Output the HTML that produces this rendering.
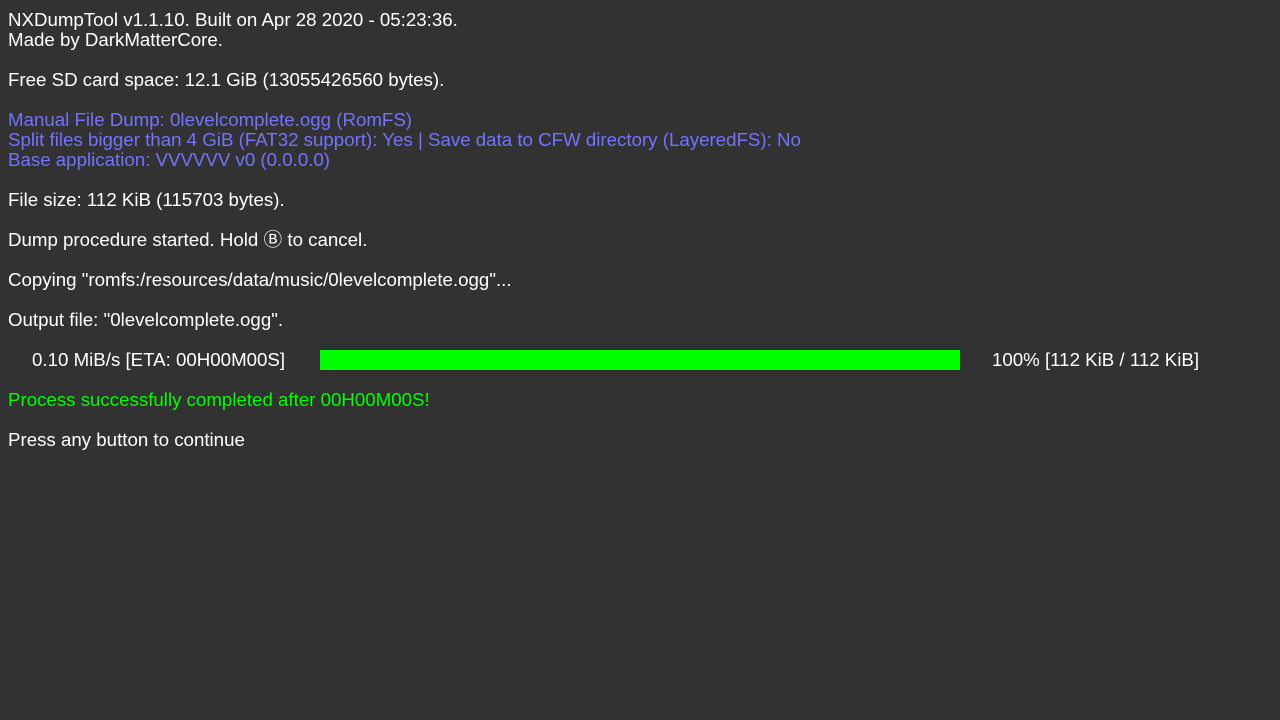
<!DOCTYPE html>
<html><head><meta charset="utf-8"><style>
body{margin:0;width:1280px;height:720px;background:#323232;overflow:hidden;font-family:"Liberation Sans",sans-serif;font-size:18.7px;color:#fff}
.l{position:absolute;left:8px;white-space:pre;line-height:20px}
.b{color:#7373ff}.g{color:#00ff00}
</style></head><body>
<div class="l" style="top:10px">NXDumpTool v1.1.10. Built on Apr 28 2020 - 05:23:36.</div>
<div class="l" style="top:30px">Made by DarkMatterCore.</div>
<div class="l" style="top:70px">Free SD card space: 12.1 GiB (13055426560 bytes).</div>
<div class="l b" style="top:110px">Manual File Dump: 0levelcomplete.ogg (RomFS)</div>
<div class="l b" style="top:130px">Split files bigger than 4 GiB (FAT32 support): Yes | Save data to CFW directory (LayeredFS): No</div>
<div class="l b" style="top:150px">Base application: VVVVVV v0 (0.0.0.0)</div>
<div class="l" style="top:190px">File size: 112 KiB (115703 bytes).</div>
<div class="l" style="top:230px">Dump procedure started. Hold Ⓑ to cancel.</div>
<div class="l" style="top:270px">Copying "romfs:/resources/data/music/0levelcomplete.ogg"...</div>
<div class="l" style="top:310px">Output file: "0levelcomplete.ogg".</div>
<div class="l" style="top:350px;left:32px">0.10 MiB/s [ETA: 00H00M00S]</div>
<div style="position:absolute;left:320px;top:350px;width:640px;height:20px;background:#00ff00"></div>
<div class="l" style="top:350px;left:992px">100% [112 KiB / 112 KiB]</div>
<div class="l g" style="top:390px">Process successfully completed after 00H00M00S!</div>
<div class="l" style="top:430px">Press any button to continue</div>
</body></html>
